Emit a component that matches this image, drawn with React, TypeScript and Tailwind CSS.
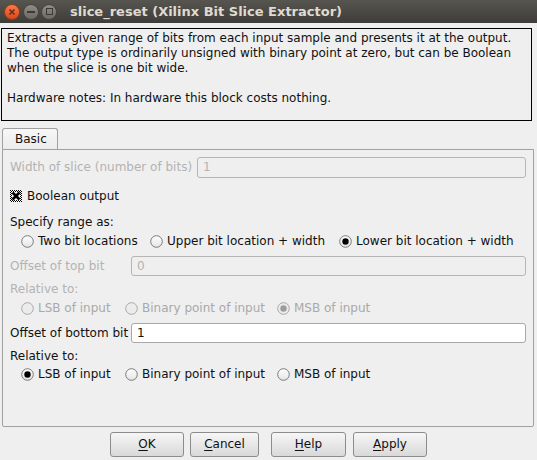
import React from "react";

const F = { fontFamily: '"DejaVu Sans", Verdana, sans-serif' };

function Radio({ checked, disabled }: { checked?: boolean; disabled?: boolean }) {
  return (
    <svg width="13" height="13" viewBox="0 0 13 13" className="shrink-0">
      <defs>
        <linearGradient id="rg" x1="0" y1="0" x2="0" y2="1">
          <stop offset="0" stopColor="#ffffff" />
          <stop offset="1" stopColor="#e4e4e4" />
        </linearGradient>
      </defs>
      <circle cx="6.5" cy="6.5" r="5.8" fill={disabled ? "#ececec" : "url(#rg)"} stroke={disabled ? "#a8a8a8" : "#7a7a7a"} strokeWidth="1" />
      {checked && <circle cx="6.5" cy="6.5" r="3.2" fill={disabled ? "#9c9c9c" : "#000"} />}
    </svg>
  );
}

function CheckBox() {
  const cells = [] as React.ReactNode[];
  for (let y = 0; y < 12; y++)
    for (let x = 0; x < 12; x++) {
      const border = x < 2 || y < 2 || x > 9 || y > 9;
      if (border && (x + y) % 2 === 0) cells.push(<rect key={x + "-" + y} x={x} y={y} width="1" height="1" fill="#000" />);
    }
  return (
    <svg width="12" height="12" viewBox="0 0 12 12" className="shrink-0" shapeRendering="crispEdges">
      <rect x="0" y="0" width="12" height="12" fill="#fff" />
      {cells}
      <path d="M2.5 2.5 L9.5 9.5 M9.5 2.5 L2.5 9.5" stroke="#000" strokeWidth="2.8" shapeRendering="auto" />
    </svg>
  );
}

function RadioItem({ label, checked, disabled, w }: { label: string; checked?: boolean; disabled?: boolean; w: string }) {
  return (
    <div className={`flex items-center gap-[4px] ${w}`}>
      <Radio checked={checked} disabled={disabled} />
      <span className={disabled ? "text-[#a9a9a9]" : "text-[#111]"}>{label}</span>
    </div>
  );
}

function Btn({ u, rest, w }: { u: string; rest: string; w: string }) {
  return (
    <div className={`${w} h-[25px] rounded-[3px] border border-[#8c8c8c] bg-gradient-to-b from-[#f6f6f6] to-[#d9d9d9] flex items-center justify-center text-[#111]`}>
      <span>
        <span className="underline underline-offset-[2px]">{u}</span>
        {rest}
      </span>
    </div>
  );
}

export default function App() {
  return (
    <div className="w-[537px] h-[460px] bg-[#efefef] text-[12px] leading-[15px] overflow-hidden" style={F}>
      {/* title bar */}
      <div className="h-[23px] bg-gradient-to-b from-[#57554f] to-[#3e3d39] flex items-center">
        <div className="ml-[4px] w-[16px] h-[16px] rounded-full bg-gradient-to-b from-[#f47b4a] to-[#d9471a] border border-[#9e3a16] flex items-center justify-center">
          <svg width="8" height="8" viewBox="0 0 8 8"><path d="M1.5 1.5 L6.5 6.5 M6.5 1.5 L1.5 6.5" stroke="#6e2a12" strokeWidth="1.6" /></svg>
        </div>
        <div className="ml-[3px] w-[16px] h-[16px] rounded-full bg-gradient-to-b from-[#8f8c85] to-[#6c6a64] border border-[#45443f] flex items-center justify-center">
          <div className="w-[8px] h-[2px] bg-[#3a3935]" />
        </div>
        <div className="ml-[2px] w-[16px] h-[16px] rounded-full bg-gradient-to-b from-[#8f8c85] to-[#6c6a64] border border-[#45443f] flex items-center justify-center">
          <div className="w-[7px] h-[7px] border-[1.5px] border-[#3a3935]" />
        </div>
        <div className="ml-[13px] text-[13px] font-bold text-[#dfdbd2]" style={{ fontFamily: '"DejaVu Sans", sans-serif' }}>
          slice_reset (Xilinx Bit Slice Extractor)
        </div>
      </div>

      {/* description */}
      <div className="mt-[5px] ml-[1px] w-[531px] h-[93px] border border-black px-[5px] pt-[2px] text-[#111]">
        <div>Extracts a given range of bits from each input sample and presents it at the output.</div>
        <div>The output type is ordinarily unsigned with binary point at zero, but can be Boolean</div>
        <div>when the slice is one bit wide.</div>
        <div>&nbsp;</div>
        <div>Hardware notes: In hardware this block costs nothing.</div>
      </div>

      {/* tab */}
      <div className="mt-[7px] ml-[2px] w-[56px] h-[21px] border border-b-0 border-[#a0a0a0] rounded-t-[3px] bg-gradient-to-b from-[#f7f7f7] to-[#ececec] flex items-center pl-[12px] text-[#111]">
        Basic
      </div>
      <div className="ml-[2px] w-[532px] h-[278px] border border-[#a0a0a0] rounded-b-[2px] pl-[7px] pr-[7px] flex flex-col">
        <div className="mt-[7px] h-[21px] flex items-center">
          <div className="w-[187px] text-[#b3b3b3]">Width of slice (number of bits)</div>
          <div className="flex-1 h-[21px] border border-[#b5b5b5] rounded-[3px] bg-[#efefef] flex items-center pl-[5px] text-[#b3b3b3]">1</div>
        </div>
        <div className="mt-[10px] h-[16px] flex items-center gap-[5px]">
          <CheckBox />
          <span className="text-[#111]">Boolean output</span>
        </div>
        <div className="mt-[10px] h-[16px] flex items-center text-[#111]">Specify range as:</div>
        <div className="mt-[3px] h-[16px] flex items-center pl-[11px]">
          <RadioItem label="Two bit locations" w="w-[129px]" />
          <RadioItem label="Upper bit location + width" w="w-[189px]" />
          <RadioItem label="Lower bit location + width" checked w="" />
        </div>
        <div className="mt-[7px] h-[20px] flex items-center">
          <div className="w-[121px] text-[#b3b3b3]">Offset of top bit</div>
          <div className="flex-1 h-[20px] border border-[#b5b5b5] rounded-[3px] bg-[#efefef] flex items-center pl-[5px] text-[#b3b3b3]">0</div>
        </div>
        <div className="mt-[5px] h-[16px] flex items-center text-[#b3b3b3]">Relative to:</div>
        <div className="mt-[3px] h-[16px] flex items-center pl-[11px]">
          <RadioItem label="LSB of input" disabled w="w-[104px]" />
          <RadioItem label="Binary point of input" disabled w="w-[152px]" />
          <RadioItem label="MSB of input" checked disabled w="" />
        </div>
        <div className="mt-[7px] h-[20px] flex items-center">
          <div className="w-[121px] text-[#111]">Offset of bottom bit</div>
          <div className="flex-1 h-[20px] border border-[#a8a8a8] rounded-[3px] bg-white flex items-center pl-[5px] text-[#111]">1</div>
        </div>
        <div className="mt-[5px] h-[16px] flex items-center text-[#111]">Relative to:</div>
        <div className="mt-[2px] h-[16px] flex items-center pl-[11px]">
          <RadioItem label="LSB of input" checked w="w-[104px]" />
          <RadioItem label="Binary point of input" w="w-[152px]" />
          <RadioItem label="MSB of input" w="" />
        </div>
      </div>

      {/* buttons */}
      <div className="mt-[5px] flex">
        <div className="ml-[110px]"><Btn u="O" rest="K" w="w-[74px]" /></div>
        <div className="ml-[6px]"><Btn u="C" rest="ancel" w="w-[69px]" /></div>
        <div className="ml-[12px]"><Btn u="H" rest="elp" w="w-[75px]" /></div>
        <div className="ml-[7px]"><Btn u="A" rest="pply" w="w-[74px]" /></div>
      </div>
    </div>
  );
}
